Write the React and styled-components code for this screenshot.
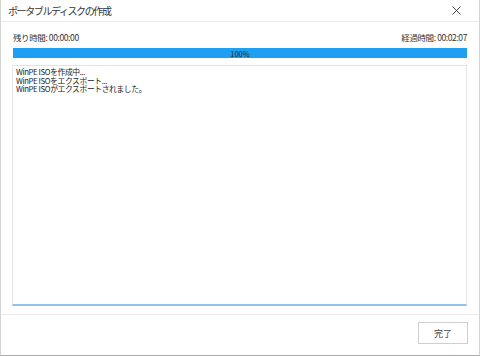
import React from 'react';
import styled, { createGlobalStyle } from 'styled-components';

const GlobalStyle = createGlobalStyle`
  *, *::before, *::after {
    box-sizing: border-box;
  }
  html, body {
    margin: 0;
    padding: 0;
    background: #ffffff;
  }
  body {
    font-family: "Noto Sans CJK JP", "Noto Sans", sans-serif;
    color: #333333;
  }
`

const Window = styled.div`
  width: 480px;
  height: 356px;
  display: flex;
  flex-direction: column;
  background: #ffffff;
  border-left: 1px solid #d4d4d4;
  border-right: 1px solid #d4d4d4;
  border-bottom: 1px solid #a8a8a8;
`

const TitleBar = styled.div`
  height: 22px;
  flex-shrink: 0;
  border-bottom: 1px solid #ececec;
  display: flex;
  align-items: center;
  justify-content: space-between;
  padding: 0 18px 0 7px;
  font-size: 10px;
  letter-spacing: -1.4px;
  color: #333;
`

const CloseButton = styled.div`
  width: 10px;
  height: 10px;
  display: flex;
  align-items: center;
  justify-content: center;
`

const Body = styled.div`
  flex: 1;
  display: flex;
  flex-direction: column;
  padding: 9px 12px 8px 11px;
  min-height: 0;
`

const TimeRow = styled.div`
  height: 12px;
  display: flex;
  align-items: center;
  justify-content: space-between;
  font-size: 8.5px;
  letter-spacing: -0.4px;
  color: #333;
  padding-left: 1px;
`

const ProgressTrack = styled.div`
  margin-top: 5px;
  margin-left: 1px;
  height: 10px;
  background: #e6e6e6;
  position: relative;
`

const ProgressFill = styled.div`
  height: 100%;
  background: #1ea0f2;
`

const ProgressLabel = styled.span`
  position: absolute;
  inset: 0;
  display: flex;
  align-items: center;
  justify-content: center;
  font-size: 7.5px;
  color: #222;
`

const LogBox = styled.div`
  margin-top: 7px;
  flex: 1;
  border: 1px solid #e4e4e4;
  border-bottom: 2px solid #94c2ec;
  padding: 2px 3px;
  font-size: 7.8px;
  line-height: 8.5px;
  letter-spacing: -0.4px;
  color: #222;
`

const LogLine = styled.div`
  white-space: nowrap;
`

const Footer = styled.div`
  height: 41px;
  flex-shrink: 0;
  border-top: 1px solid #ececec;
  display: flex;
  align-items: flex-start;
  justify-content: flex-end;
  padding: 7px 11px 0 0;
`

const Button = styled.div`
  width: 50px;
  height: 22px;
  border: 1px solid #cfcfcf;
  display: flex;
  align-items: center;
  justify-content: center;
  font-size: 9px;
  color: #444;
  background: #fff;
`

const logs = [
  'WinPE ISOを作成中...',
  'WinPE ISOをエクスポート...',
  'WinPE ISOがエクスポートされました。',
]

const App = () => {
  const progress = 100
  return (
    <>
      <GlobalStyle />
      <Window>
        <TitleBar>
          <span>ポータブルディスクの作成</span>
          <CloseButton>
            <svg width="9" height="9" viewBox="0 0 9 9">
              <path d="M0.5 0.5 L8.5 8.5 M8.5 0.5 L0.5 8.5" stroke="#333" strokeWidth="0.9" />
            </svg>
          </CloseButton>
        </TitleBar>
        <Body>
          <TimeRow>
            <span>残り時間: 00:00:00</span>
            <span>経過時間: 00:02:07</span>
          </TimeRow>
          <ProgressTrack>
            <ProgressFill style={{ width: `${progress}%` }} />
            <ProgressLabel>{progress}%</ProgressLabel>
          </ProgressTrack>
          <LogBox>
            {logs.map((l) => (
              <LogLine key={l}>{l}</LogLine>
            ))}
          </LogBox>
        </Body>
        <Footer>
          <Button>完了</Button>
        </Footer>
      </Window>
    </>
  );
};

export default App;
